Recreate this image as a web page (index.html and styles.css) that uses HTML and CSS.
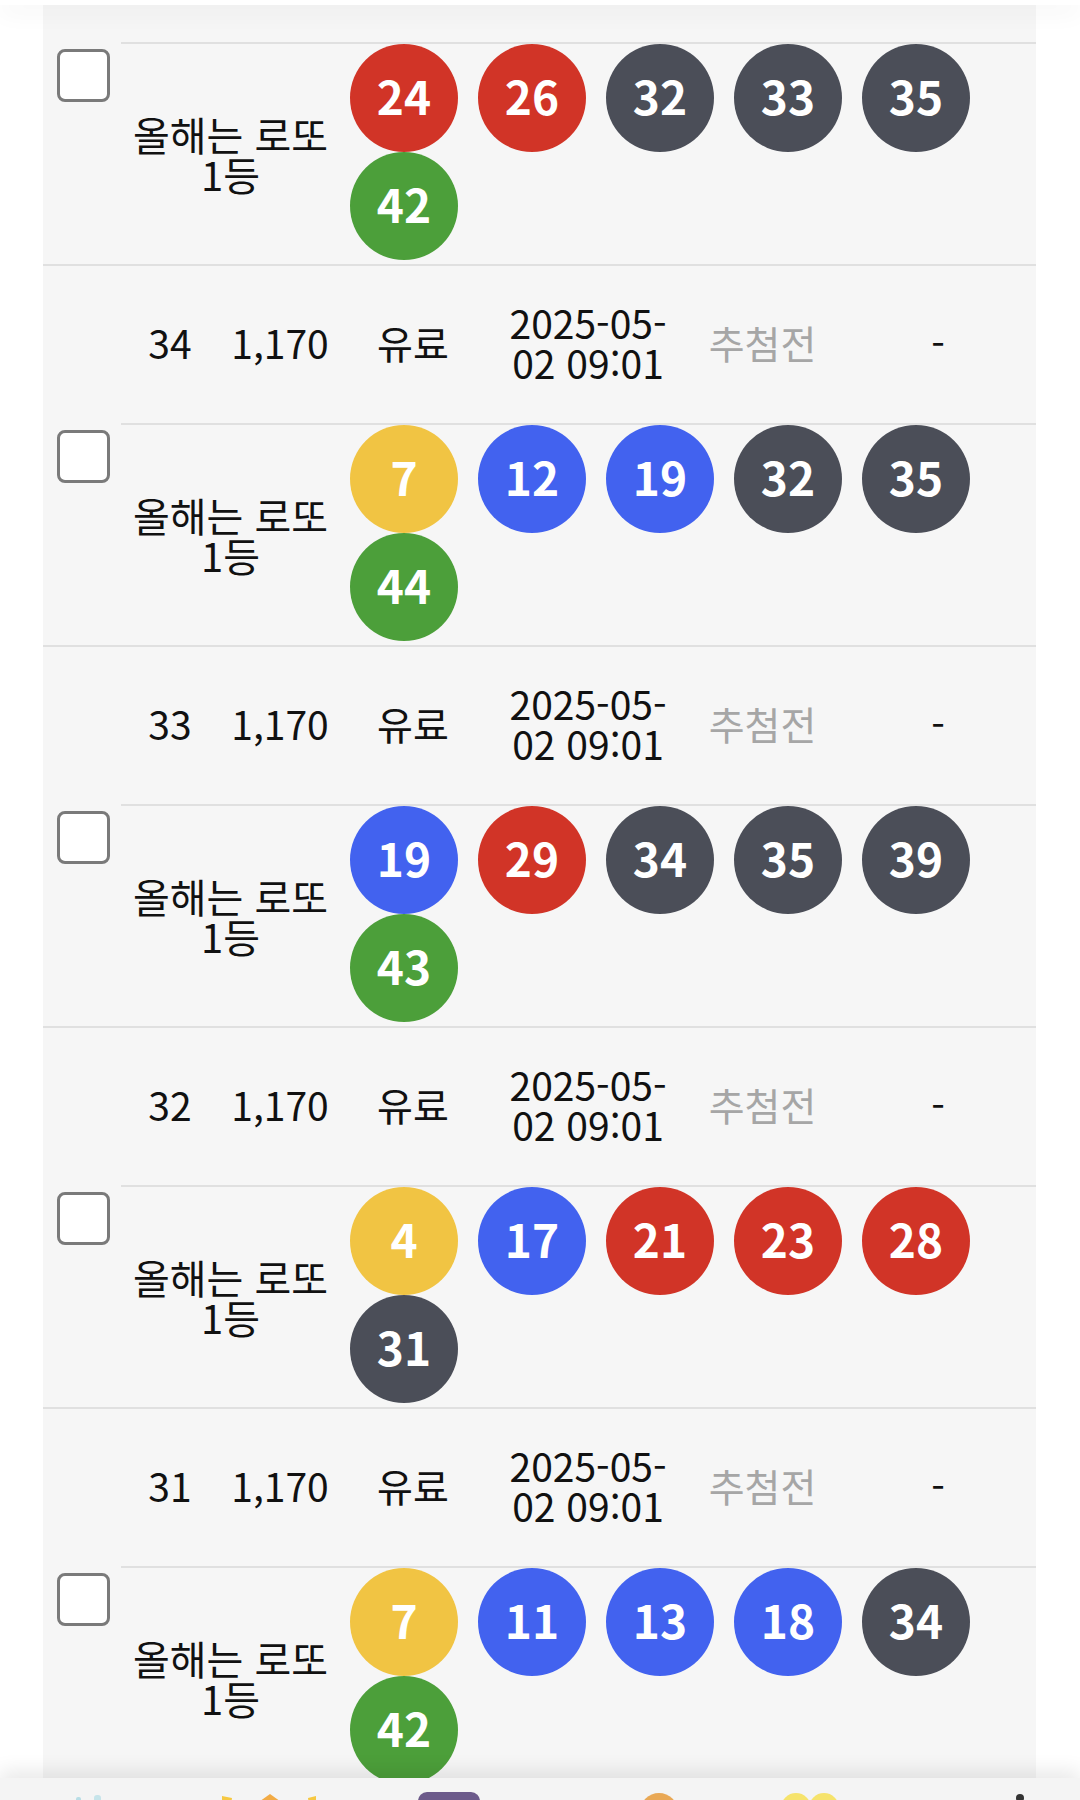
FILE: index.html
```html
<!DOCTYPE html>
<html lang="ko">
<head>
    <meta charset="UTF-8">
    <meta name="viewport" content="width=device-width, initial-scale=1.0">
    <title>구매 내역 | 올해는 로또</title>
    <link rel="stylesheet" href="styles.css">
</head>
<body>
    <div class="top-bar"></div>

    <div class="ticket-list">
        <!-- 35 -->
        <div class="ticket-pick">
            <input type="checkbox" class="pick-check">
            <div class="pick-body">
                <div class="pick-name">올해는 로또 1등</div>
                <div class="balls">
                    <span class="ball red">24</span>
                    <span class="ball red">26</span>
                    <span class="ball gray">32</span>
                    <span class="ball gray">33</span>
                    <span class="ball gray">35</span>
                    <span class="ball green">42</span>
                </div>
            </div>
        </div>

        <!-- 34 -->
        <div class="ticket-info">
            <span>34</span>
            <span>1,170</span>
            <span>유료</span>
            <span>2025-05-<br>02 09:01</span>
            <span class="state">추첨전</span>
            <span class="result">-</span>
        </div>
        <div class="ticket-pick">
            <input type="checkbox" class="pick-check">
            <div class="pick-body">
                <div class="pick-name">올해는 로또 1등</div>
                <div class="balls">
                    <span class="ball yellow">7</span>
                    <span class="ball blue">12</span>
                    <span class="ball blue">19</span>
                    <span class="ball gray">32</span>
                    <span class="ball gray">35</span>
                    <span class="ball green">44</span>
                </div>
            </div>
        </div>

        <!-- 33 -->
        <div class="ticket-info">
            <span>33</span>
            <span>1,170</span>
            <span>유료</span>
            <span>2025-05-<br>02 09:01</span>
            <span class="state">추첨전</span>
            <span class="result">-</span>
        </div>
        <div class="ticket-pick">
            <input type="checkbox" class="pick-check">
            <div class="pick-body">
                <div class="pick-name">올해는 로또 1등</div>
                <div class="balls">
                    <span class="ball blue">19</span>
                    <span class="ball red">29</span>
                    <span class="ball gray">34</span>
                    <span class="ball gray">35</span>
                    <span class="ball gray">39</span>
                    <span class="ball green">43</span>
                </div>
            </div>
        </div>

        <!-- 32 -->
        <div class="ticket-info">
            <span>32</span>
            <span>1,170</span>
            <span>유료</span>
            <span>2025-05-<br>02 09:01</span>
            <span class="state">추첨전</span>
            <span class="result">-</span>
        </div>
        <div class="ticket-pick">
            <input type="checkbox" class="pick-check">
            <div class="pick-body">
                <div class="pick-name">올해는 로또 1등</div>
                <div class="balls">
                    <span class="ball yellow">4</span>
                    <span class="ball blue">17</span>
                    <span class="ball red">21</span>
                    <span class="ball red">23</span>
                    <span class="ball red">28</span>
                    <span class="ball gray">31</span>
                </div>
            </div>
        </div>

        <!-- 31 -->
        <div class="ticket-info">
            <span>31</span>
            <span>1,170</span>
            <span>유료</span>
            <span>2025-05-<br>02 09:01</span>
            <span class="state">추첨전</span>
            <span class="result">-</span>
        </div>
        <div class="ticket-pick">
            <input type="checkbox" class="pick-check">
            <div class="pick-body">
                <div class="pick-name">올해는 로또 1등</div>
                <div class="balls">
                    <span class="ball yellow">7</span>
                    <span class="ball blue">11</span>
                    <span class="ball blue">13</span>
                    <span class="ball blue">18</span>
                    <span class="ball gray">34</span>
                    <span class="ball green">42</span>
                </div>
            </div>
        </div>
    </div>

    <nav class="bottom-nav">
        <a class="nav-item"><svg width="180" height="30"><rect x="76" y="5" width="5" height="20" rx="2" fill="#b8dde6"/><rect x="94" y="3" width="7" height="22" rx="3" fill="#c6e4ea"/></svg></a>
        <a class="nav-item"><svg width="180" height="30"><path d="M42 4 L52 6 L50 20 L42 20 Z" fill="#f6c842"/><path d="M90 2 L104 12 L102 24 L78 24 L76 12 Z" fill="#f2ab45"/><path d="M136 4 L128 6 L130 20 L136 20 Z" fill="#f6c842"/></svg></a>
        <a class="nav-item"><svg width="180" height="30"><rect x="58" y="0" width="62" height="40" rx="9" fill="#6c5a8a"/></svg></a>
        <a class="nav-item"><svg width="180" height="30"><circle cx="119" cy="20" r="19" fill="#e9a855"/></svg></a>
        <a class="nav-item"><svg width="180" height="30"><circle cx="76" cy="16" r="15" fill="#f6e36c"/><circle cx="104" cy="16" r="15" fill="#f6e36c"/></svg></a>
        <a class="nav-item"><svg width="180" height="30"><circle cx="120" cy="6" r="4" fill="#333"/><rect x="104" y="8" width="6" height="12" rx="3" fill="#cfcfcf"/><rect x="130" y="8" width="6" height="12" rx="3" fill="#cfcfcf"/></svg></a>
    </nav>
</body>
</html>
```

FILE: styles.css
```css
* {
    box-sizing: border-box;
}
body {
    margin: 0;
    background: #fff;
    font-family: "Noto Sans CJK KR", "Noto Sans", sans-serif;
    color: #111;
}
.top-bar {
    position: relative;
    z-index: 2;
    height: 5px;
    background: #fff;
    box-shadow: 0 4px 24px rgba(0, 0, 0, 0.12);
}
.ticket-list {
    margin: 0 44px 0 43px;
    padding: 37px 0 40px;
    background: #f6f6f6;
}

/* 회차 / 금액 / 구분 / 구매일 / 상태 / 결과 */
.ticket-info {
    display: grid;
    grid-template-columns: 98px 122px 144px 206px 143px 1fr;
    align-items: center;
    height: 159px;
    padding: 0 0 6px 78px;
    border-top: 2px solid #e0e0e0;
    font-size: 39px;
    line-height: 40px;
    text-align: center;
}
.ticket-info .state {
    color: #a6a6a6;
}
.ticket-info .result {
    padding-left: 6px;
}

.ticket-pick {
    display: flex;
}
.pick-check {
    appearance: none;
    flex-shrink: 0;
    width: 53px;
    height: 53px;
    margin: 7px 11px 0 14px;
    border: 3px solid #7a7a7a;
    border-radius: 8px;
    background: #fff;
}
.pick-body {
    flex: 1;
    display: flex;
    align-items: center;
    padding-bottom: 4px;
    border-top: 2px solid #e0e0e0;
}
.pick-name {
    width: 219px;
    padding-top: 4px;
    font-size: 40px;
    line-height: 40px;
    text-align: center;
    word-break: keep-all;
}
.balls {
    flex: 1;
    display: flex;
    flex-wrap: wrap;
}
.ball {
    display: flex;
    align-items: center;
    justify-content: center;
    width: 108px;
    height: 108px;
    margin: 0 10px;
    padding-bottom: 6px;
    border-radius: 50%;
    color: #fff;
    font-size: 46px;
    font-weight: 700;
    line-height: 1;
}
.ball.yellow { background: #f1c443; }
.ball.blue { background: #4262ef; }
.ball.red { background: #d13427; }
.ball.gray { background: #4b4e58; }
.ball.green { background: #4c9f3a; }

.bottom-nav {
    position: fixed;
    left: 0;
    right: 0;
    bottom: 0;
    z-index: 3;
    display: grid;
    grid-template-columns: repeat(6, 1fr);
    height: 22px;
    padding-top: 14px;
    overflow: hidden;
    background: #f4f4f4;
    box-shadow: 0 -6px 20px rgba(0, 0, 0, 0.1);
}
.nav-item svg {
    display: block;
}
```
